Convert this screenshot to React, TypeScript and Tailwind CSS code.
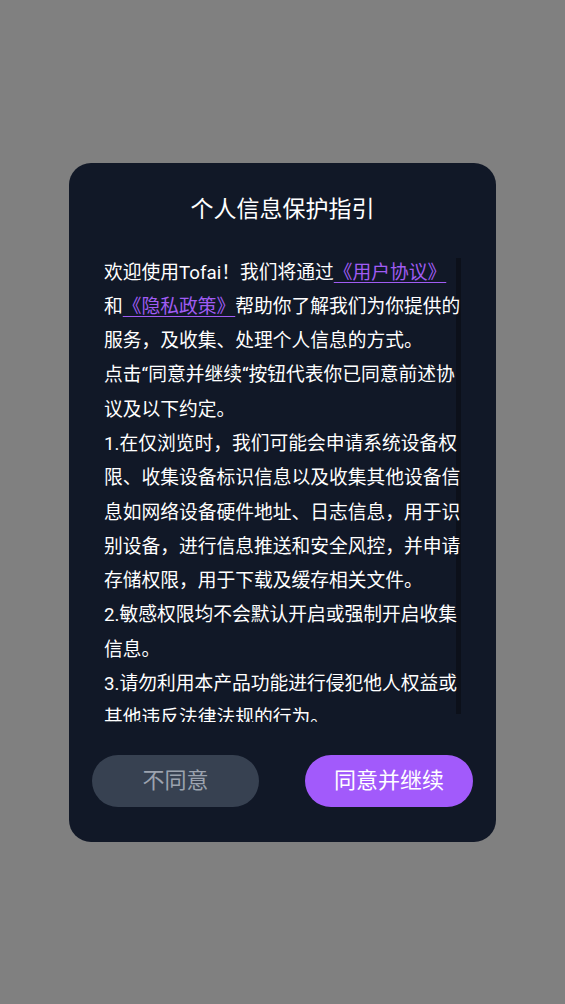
import React from 'react';

const font = 'font-[Roboto,"Noto_Sans_CJK_SC",sans-serif]';

export default function App() {
    return (
        <div className={`flex h-[1004px] w-full items-center justify-center bg-[#808080] ${font}`}>
            <div className="flex w-[427px] flex-col rounded-[22px] bg-[#111827] pt-[32px] pb-[35px]">
                <h1 className="text-center text-[23px] leading-[30px] font-normal text-white">个人信息保护指引</h1>

                <div className="relative mx-[35px] mt-[31px] h-[466px] overflow-hidden">
                    {/* scroll thumb sits under the text */}
                    <div className="absolute top-[2px] right-0 h-[456px] w-[5px] bg-[#0c101a]" />
                    <div className="relative w-[357px] text-[18.75px] leading-[34.3px] text-white">
                        <p>
                            欢迎使用Tofai！我们将通过
                            <a className="text-[#a05cf3] underline underline-offset-[3px]">《用户协议》</a>和
                            <a className="text-[#a05cf3] underline underline-offset-[3px]">《隐私政策》</a>
                            帮助你了解我们为你提供的服务，及收集、处理个人信息的方式。
                        </p>
                        <p>点击“同意并继续“按钮代表你已同意前述协议及以下约定。</p>
                        <p>
                            1.在仅浏览时，我们可能会申请系统设备权限、收集设备标识信息以及收集其他设备信息如网络设备硬件地址、日志信息，用于识别设备，进行信息推送和安全风控，并申请存储权限，用于下载及缓存相关文件。
                        </p>
                        <p>2.敏感权限均不会默认开启或强制开启收集信息。</p>
                        <p>3.请勿利用本产品功能进行侵犯他人权益或其他违反法律法规的行为。</p>
                    </div>
                </div>

                <div className="mt-[33px] flex justify-between px-[23px]">
                    <button
                        type="button"
                        className="h-[52px] w-[167px] rounded-full bg-[#374151] text-[22px] text-[#9ca3af]"
                    >
                        不同意
                    </button>
                    <button
                        type="button"
                        className="h-[52px] w-[168px] rounded-full bg-[#a25afb] text-[22px] text-white"
                    >
                        同意并继续
                    </button>
                </div>
            </div>
        </div>
    );
}
